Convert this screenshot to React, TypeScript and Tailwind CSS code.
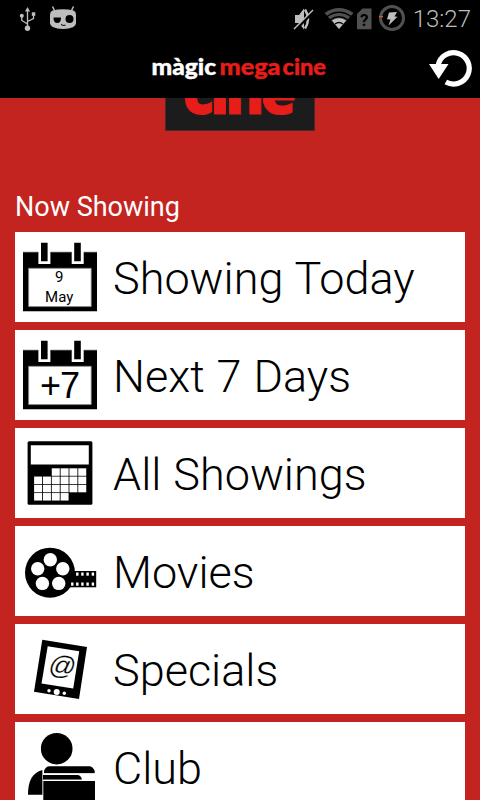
import { FunctionComponent, type ReactNode } from "react";

type IconProps = {
  children: ReactNode;
};

const RowIcon: FunctionComponent<IconProps> = ({ children }) => (
  <svg viewBox="0 0 90 90" className="h-[90px] w-[90px] shrink-0">
    {children}
  </svg>
);

const CalendarShape = () => (
  <>
    <path d="M8 20h74v59H8z" />
    <path
      d="M23.4 18h12v14h-12zM56.7 18h12v14h-12z"
      className="fill-white"
    />
    <path
      d="M8 19.8h15v.6H8zM36 19.8h20.5v.6H36zM69 19.8h13v.6H69zM8 79h74v.5H8z"
      fill="#777"
    />
    <path d="M26 10.7h6.6v18.6H26zM59.2 10.7h6.6v18.6h-6.6z" />
    <path
      d="M13.6 36.3h62.6v38.3H13.6z"
      fill="#fff"
      stroke="#888"
      strokeWidth=".8"
    />
  </>
);

const TodayIcon = () => (
  <RowIcon>
    <CalendarShape />
    <g fontFamily="Roboto, sans-serif" fontSize="15" textAnchor="middle">
      <text x="44.2" y="50">
        9
      </text>
      <text x="44.2" y="70">
        May
      </text>
    </g>
  </RowIcon>
);

const WeekIcon = () => (
  <RowIcon>
    <CalendarShape />
    <text
      x="45"
      y="67.7"
      fontFamily="Liberation Sans, sans-serif"
      fontSize="36"
      textAnchor="middle"
      textLength="40"
    >
      +7
    </text>
  </RowIcon>
);

// first and last column (exclusive) of each week in the month grid
const weeks = [
  [2, 6],
  [0, 6],
  [0, 6],
  [0, 4],
];

const MonthIcon = () => (
  <RowIcon>
    <rect x="12.6" y="13.3" width="64.8" height="63.4" rx="1.5" />
    <path d="M15.8 17.2h58v19.2h-58z" fill="#fff" />
    {weeks.map(([start, end], row) =>
      Array.from({ length: end - start }, (_, i) => (
        <rect
          key={`${row}-${i}`}
          x={19.1 + (start + i) * 8.83}
          y={40.3 + row * 8.25}
          width="8"
          height="7.5"
          fill="#fff"
        />
      ))
    )}
  </RowIcon>
);

const ReelIcon = () => (
  <RowIcon>
    <circle cx="35" cy="46.7" r="25" />
    <path d="M50 45h31.2v16.3H50z" />
    <g fill="#fff">
      <circle cx="35.3" cy="33.7" r="6.7" />
      <circle cx="22.7" cy="42.7" r="6.7" />
      <circle cx="47.8" cy="42.7" r="6.7" />
      <circle cx="27.4" cy="57.4" r="6.7" />
      <circle cx="43.7" cy="57.4" r="6.7" />
      {[62.3, 67.4, 72.6, 77.9].map((x) => (
        <rect key={x} x={x - 1.2} y="46.5" width="2.4" height="3.2" />
      ))}
      {[57.3, 62.3, 67.4, 72.6, 77.9].map((x) => (
        <rect key={x} x={x - 1.2} y="56.5" width="2.4" height="3.2" />
      ))}
    </g>
  </RowIcon>
);

const TabletIcon = () => (
  <RowIcon>
    <path d="M27.3 15.7 72 23 64 75 19 67.7z" />
    <g fill="#fff">
      <path d="M32.7 22.2 64.2 27.3 58.2 64.5 26.5 59.5z" />
      <circle cx="41.7" cy="68" r="3" />
      <circle cx="34" cy="66.7" r="1.7" />
      <circle cx="49.3" cy="69.3" r="1.7" />
    </g>
    <text
      transform="translate(45.6 50.5) rotate(5) skewX(-8)"
      fontFamily="Liberation Sans, sans-serif"
      fontSize="26.5"
      textAnchor="middle"
      stroke="#fff"
      strokeWidth=".2"
    >
      @
    </text>
  </RowIcon>
);

const ClubIcon = () => (
  <RowIcon>
    <circle cx="41.7" cy="26.7" r="15.8" />
    <path d="M27.4 48v24.8H13C13 59 17 51 27.4 48z" />
    <path d="M29 51.4V49q1.5-4.7 5.5-4.7H74q4 0 5.7 4.7v2.4z" />
    <path d="M28 53h35q3 .5 4 4.7H28z" />
    <path d="M28.3 59H80v20q0 5-5 5H33.3q-5 0-5-5z" />
    <path
      d="M28.3 51.9H80M28.3 58.4H80"
      stroke="#fff"
      strokeWidth="1.2"
    />
  </RowIcon>
);

const StatusBar = () => (
  <div className="flex h-[38px] items-center pr-[9px] pl-[19px]">
    <svg viewBox="0 0 60 38" className="h-[38px] w-[60px]">
      <g fill="none" stroke="#bebebe" strokeWidth="1.3">
        <path d="M8.5 10v18M8.5 24l-5.7-3.5V16M8.5 21.5l6-3V15" />
      </g>
      <g fill="#bebebe">
        <path d="M8.5 7 11 11.5H6z" />
        <circle cx="8.5" cy="28.3" r="2.7" />
        <circle cx="2.8" cy="15.8" r="2" />
        <path d="M12.8 12.3h3.5v3.5h-3.5z" />
        <path d="M33.5 10.5q10-2.5 21 0 2.5 1 2.5 4v8q0 6-13 6.5-13-.5-13-6.5v-8q0-3 2.5-4z" />
      </g>
      <path
        d="m33.5 6.5 2 4M54.5 6.5l-2 4"
        stroke="#bebebe"
        strokeWidth="1.5"
      />
      <path d="M34.5 17.5H42q0 5.5-3.7 5.5-3.8 0-3.8-5.5z" />
      <circle cx="50.5" cy="19" r="4" />
      <path d="M42 24.5q2 1.5 4.5.7" fill="none" stroke="#000" />
    </svg>
    <svg viewBox="290 0 116 38" className="ml-auto h-[38px] w-[116px]">
      <path d="M294 15h4l5-6.5v21l-5-6.5h-4z" fill="#bebebe" />
      <path
        d="M304 9.5q6 9.500 0 19"
        fill="none"
        stroke="#bebebe"
        strokeWidth="2.5"
      />
      <path d="m294 30 19-19" stroke="#000" strokeWidth="3" />
      <path d="m293 29 19-19" stroke="#bebebe" strokeWidth="1.5" />
      <path d="M338 29 323.5 13q14.500-10 29 0z" fill="#505050" />
      <path d="m338 29-7-8.5q7-4.500 14 0z" fill="#bebebe" />
      <path
        d="M326 16.5q12-8.500 24 0M329 20q9-6.500 18 0M334 24q4-3 8 0"
        fill="none"
        stroke="#000"
        strokeWidth="1.3"
      />
      <path d="M361.5 8.5h9v20.8H356V14z" fill="#505050" />
      <text
        x="363.3"
        y="25.5"
        fontFamily="Roboto, sans-serif"
        fontSize="17"
        fontWeight="700"
        textAnchor="middle"
      >
        ?
      </text>
      <circle
        cx="391"
        cy="18"
        r="11.5"
        fill="none"
        stroke="#505050"
        strokeWidth="3"
      />
      <path d="M378 16.6h4" stroke="#e0563a" strokeWidth="1.2" />
      <path
        d="m388 12.5 8-.5-2.500 4.500 3 .2-9 8.800 2-6-3.500-.2z"
        fill="#bebebe"
      />
    </svg>
    <span className="ml-[6px] text-[24px] leading-none font-light text-[#bebebe]">
      13:27
    </span>
  </div>
);

const Header = () => (
  <header className="flex h-[60px] items-center justify-end pr-[7px]">
    <svg
      viewBox="0 0 180 60"
      className="mr-[99px] h-[60px] w-[180px] shrink-0"
      fontFamily="Lato, sans-serif"
      fontSize="23"
      fontWeight="900"
      strokeWidth=".4"
    >
      <text
        x="1.5"
        y="37.3"
        fill="#fff"
        stroke="#fff"
        textLength="64.5"
        lengthAdjust="spacingAndGlyphs"
      >
        màgic
      </text>
      <text
        x="69.5"
        y="37.3"
        fill="#e71d19"
        stroke="#e71d19"
        textLength="61"
        lengthAdjust="spacingAndGlyphs"
      >
        mega
      </text>
      <text
        x="132.5"
        y="37.3"
        fill="#e71d19"
        stroke="#e71d19"
        textLength="43.5"
        lengthAdjust="spacingAndGlyphs"
      >
        cine
      </text>
    </svg>
    <svg viewBox="0 0 44 44" className="h-[44px] w-[44px]">
      <path
        d="M9.2 19A15.7 15.7 0 1 1 16.8 36"
        fill="none"
        stroke="#fff"
        strokeWidth="5.2"
      />
      <path d="M0 18h19.5L9.7 33z" fill="#fff" />
    </svg>
  </header>
);

const Banner = () => (
  <svg viewBox="0 0 150 33" className="mx-auto h-[33px] w-[150px] shrink-0">
    <path d="M0 0h150v33H0z" fill="#1c1c1c" />
    <path d="M.5 0v32.5h149V0" fill="none" stroke="#4a2a28" />
    <text
      x="18"
      y="15.5"
      fontFamily="Open Sans, sans-serif"
      fontSize="62"
      fontWeight="800"
      letterSpacing="-4"
      fill="#e71d19"
      stroke="#e71d19"
      textLength="110"
      lengthAdjust="spacingAndGlyphs"
    >
      cine
    </text>
  </svg>
);

const rows = [
  { label: "Showing Today", icon: <TodayIcon /> },
  { label: "Next 7 Days", icon: <WeekIcon /> },
  { label: "All Showings", icon: <MonthIcon /> },
  { label: "Movies", icon: <ReelIcon /> },
  { label: "Specials", icon: <TabletIcon /> },
  { label: "Club", icon: <ClubIcon /> },
];

const App: FunctionComponent = () => (
  <div className="flex h-[800px] w-[480px] flex-col overflow-hidden bg-[#c42420] font-['Roboto',sans-serif]">
    <div className="shrink-0 bg-black">
      <StatusBar />
      <Header />
    </div>
    <main className="flex min-h-0 flex-1 flex-col overflow-hidden">
      <Banner />
      <h2 className="mt-[61px] mb-[9px] pl-[15px] text-[27px] leading-[31px] text-white">
        Now Showing
      </h2>
      <ul className="flex flex-col gap-2 px-[15px]">
        {rows.map(({ label, icon }) => (
          <li key={label} className="flex h-[90px] items-center bg-white">
            {icon}
            <span className="pt-0.5 pl-2 text-[45px] leading-none font-light whitespace-nowrap text-black [word-spacing:1px]">
              {label}
            </span>
          </li>
        ))}
      </ul>
    </main>
  </div>
);

export default App;
